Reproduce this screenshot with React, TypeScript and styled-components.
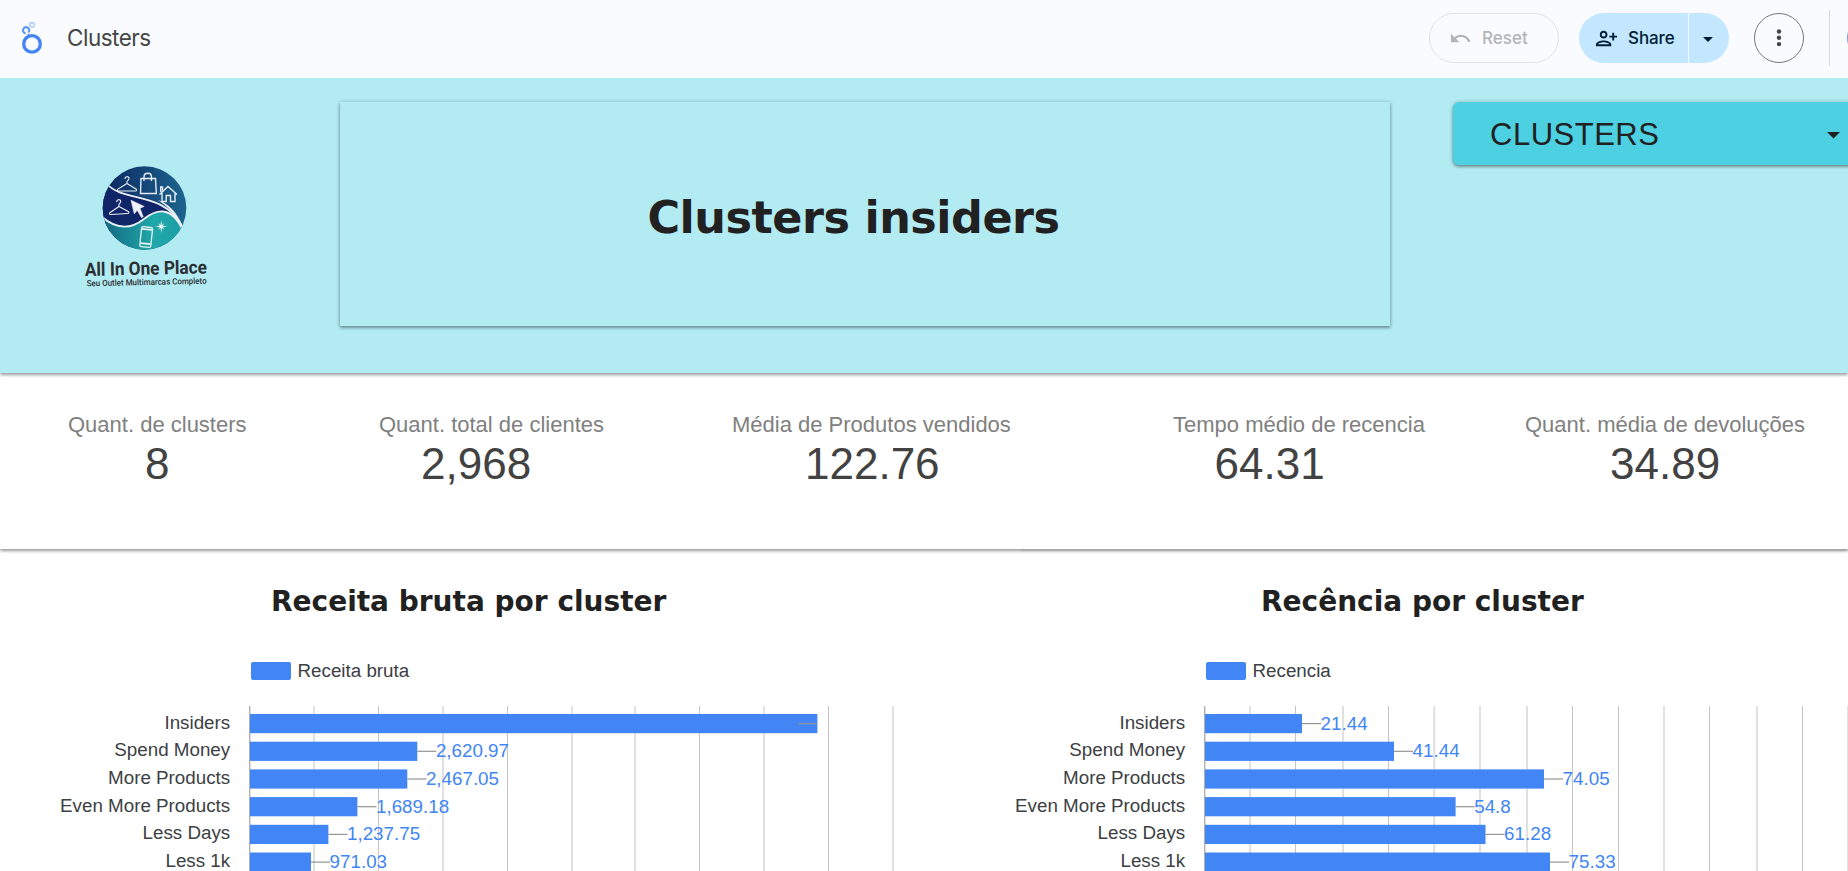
import React from "react";
import styled, { createGlobalStyle } from "styled-components";

const GlobalStyle = createGlobalStyle`
  * { box-sizing: border-box; }
  body { margin: 0; background: #fff; overflow: hidden; }
`;

const sans = `"Liberation Sans", Arial, sans-serif`;
const ui = `Inter, Roboto, sans-serif`;
const wide = `"DejaVu Sans", Verdana, sans-serif`;
const shadow = `0 2px 3px rgba(0,0,0,.33), 0 0 4px rgba(0,0,0,.2)`;

const Page = styled.div`
  width: 1848px;
  height: 871px;
  overflow: hidden;
  display: flex;
  flex-direction: column;
  background: #fff;
  font-family: ${sans};
`;

const Toolbar = styled.header`
  height: 78px;
  flex: none;
  display: flex;
  align-items: flex-start;
  padding-top: 13px;
  background: #f9fbff;
  font-family: ${ui};
  z-index: 3;
  & > * { flex: none; }
`;

const AppLogo = styled.svg`
  width: 28px;
  height: 50px;
  margin-left: 18px;
`;

const ReportName = styled.div`
  margin-left: 21px;
  width: 1362px;
  line-height: 50px;
  font-size: 22.5px;
  letter-spacing: -0.5px;
  color: #444746;
`;

const ResetButton = styled.button`
  width: 130px;
  height: 50px;
  border: 1px solid #e0e2e6;
  border-radius: 25px;
  background: transparent;
  display: flex;
  align-items: center;
  gap: 10px;
  padding: 0 0 0 19px;
  font: 500 17px ${ui};
  letter-spacing: 0;
  color: #b2b4b7;
`;

const ShareGroup = styled.div`
  margin-left: 20px;
  width: 150px;
  height: 50px;
  border-radius: 25px;
  overflow: hidden;
  display: flex;
  gap: 1px;
`;

const ShareButton = styled.button`
  width: 109px;
  border: 0;
  background: #c2e7ff;
  display: flex;
  align-items: center;
  gap: 10px;
  padding: 0 0 0 16px;
  font: 500 17px ${ui};
  letter-spacing: -0.1px;
  color: #001d35;
`;

const ShareMenu = styled.button`
  flex: 1;
  border: 0;
  background: #c2e7ff;
  padding: 3px 0 0 14px;
  display: flex;
  align-items: center;
`;

const MoreButton = styled.button`
  width: 50px;
  height: 50px;
  margin-left: 25px;
  border: 1px solid #747775;
  border-radius: 50%;
  background: transparent;
  padding: 0;
  display: flex;
  align-items: center;
  justify-content: center;
`;

const Divider = styled.div`
  width: 1px;
  height: 56px;
  margin: -3px 17px 0 25px;
  background: #d5d7da;
`;

const Avatar = styled.div`
  width: 40px;
  height: 40px;
  margin-top: 5px;
  border-radius: 50%;
  background: #7a9be0;
`;

const Hero = styled.section`
  height: 295px;
  flex: none;
  display: flex;
  align-items: flex-start;
  padding-top: 24px;
  background: #b2ebf2;
  box-shadow: ${shadow};
  z-index: 2;
`;

const BrandLogo = styled.svg`
  width: 150px;
  height: 150px;
  margin: 48px 120px 0 70px;
  flex: none;
`;

const TitleBox = styled.div`
  width: 1050px;
  height: 224px;
  flex: none;
  display: flex;
  align-items: center;
  justify-content: center;
  padding: 7px 23px 0 0;
  background: #b2ebf2;
  box-shadow: ${shadow};
`;

const Title = styled.h1`
  margin: 0;
  font: bold 44.5px ${wide};
  letter-spacing: -0.5px;
  white-space: nowrap;
  color: #212121;
`;

const ClusterSelect = styled.div`
  width: 420px;
  height: 63px;
  flex: none;
  margin-left: 63px;
  padding-left: 37px;
  display: flex;
  align-items: center;
  border-radius: 6px;
  background: #4dd0e1;
  box-shadow: ${shadow};
  font-size: 31px;
  letter-spacing: 0.5px;
  color: #212121;
  & > svg { margin-top: 4px; }
`;

const SelectText = styled.span`
  width: 337px;
  padding-top: 2px;
`;

const Kpis = styled.section`
  position: relative;
  height: 176px;
  flex: none;
  display: flex;
  padding: 38px 0 0 68px;
  background: #fff;
  box-shadow: ${shadow};
  z-index: 1;
  &::after {
    content: "";
    position: absolute;
    left: 1021px;
    right: 0;
    bottom: 0;
    height: 1px;
    box-shadow: 0 2px 2px rgba(0, 0, 0, 0.15);
  }
`;

const Kpi = styled.div<{ $width: number }>`
  width: ${(p) => p.$width}px;
  flex: none;
  white-space: nowrap;
`;

const KpiLabel = styled.div`
  font-size: 22px;
  line-height: 28px;
  color: #808080;
`;

const KpiValue = styled.div<{ $indent: number }>`
  padding-left: ${(p) => p.$indent}px;
  font-size: 44px;
  line-height: 50px;
  color: #424242;
`;

const Charts = styled.section`
  display: flex;
  flex: none;
  height: 322px;
`;

const Panel = styled.article`
  width: 955px;
  flex: none;
  padding-top: 35px;
`;

const PanelTitle = styled.h2<{ $indent: number }>`
  margin: 0 0 0 ${(p) => p.$indent}px;
  height: 78px;
  font: bold 28px/36px ${wide};
  white-space: nowrap;
  color: #212121;
`;

const Legend = styled.div`
  display: flex;
  align-items: center;
  gap: 7px;
  height: 18px;
  margin-left: 251px;
  font-size: 18.8px;
  color: #3c4043;
`;

const Swatch = styled.span`
  width: 39.5px;
  height: 18px;
  border-radius: 2px;
  background: #4285f4;
`;

const Plot = styled.svg`
  display: block;
  margin-top: 20px;
  width: 955px;
  height: 171px;
  font-family: ${sans};
  font-size: 18.8px;
`;

type Bar = { name: string; value: string; end: number; inside?: boolean };

const categories = ["Insiders", "Spend Money", "More Products", "Even More Products", "Less Days", "Less 1k"];
const revenueValues = ["", "2,620.97", "2,467.05", "1,689.18", "1,237.75", "971.03"];
const revenueEnds = [817.4, 417.3, 407.3, 357.4, 328.4, 311];
const recencyValues = ["21.44", "41.44", "74.05", "54.8", "61.28", "75.33"];
const recencyEnds = [347, 439, 589, 500.6, 530.5, 595];

const toBars = (values: string[], ends: number[]): Bar[] =>
  categories.map((name, i) => ({ name, value: values[i], end: ends[i], inside: values[i] === "" }));

const revenueGrid = [314, 378.5, 443, 507.5, 572, 635, 699.5, 764, 828.5, 893];
const recencyGrid = [295, 340.5, 388, 433.5, 479.2, 525, 572, 617.5, 663.5, 709, 754.5, 802, 847.5, 893];

function BarChart({ bars, grid }: { bars: Bar[]; grid: number[] }) {
  return (
    <Plot viewBox="0 0 955 171">
      {grid.map((x) =>
        x % 1 === 0.5 ? (
          <rect key={x} x={x - 0.5} y="6" width="1" height="165" fill="#c4c4c4" />
        ) : (
          <rect key={x} x={x - 1} y="6" width="2" height="165" fill="#e0e0e0" />
        )
      )}
      <rect x="249" y="6" width="1.4" height="165" fill="#b0b0b0" />
      {bars.map((b, i) => {
        const y = 14 + i * 27.7;
        return (
          <g key={b.name}>
            <text x="230.2" y={y + 14.6} textAnchor="end" fill="#3c4043">{b.name}</text>
            <rect x="250" y={y} width={b.end - 250} height="19.2" fill="#4285f4" />
            <rect x={b.inside ? b.end - 19 : b.end} y={y + 9} width="19" height="1.2" fill="#949494" />
            <text x={b.end + 18.6} y={y + 15.6} fill="#4285f4">{b.value}</text>
          </g>
        );
      })}
    </Plot>
  );
}

function Hanger() {
  return <path d="M-2-5c0-3 4-3 4-.6 0 2-2 2-2 3.6v1.5M0-.5l9 5.5c1 1 .6 2-.6 2H-8.6c-1.3 0-1.6-1.2-.5-1.9z" fill="none" stroke="#e6edf4" strokeWidth="1.1" />;
}

function Brand() {
  return (
    <BrandLogo viewBox="0 0 150 150">
      <defs>
        <linearGradient id="navy" x1="0" y1="0" x2="1" y2="0">
          <stop offset="0" stopColor="#0c2560" />
          <stop offset="1" stopColor="#1d6790" />
        </linearGradient>
        <linearGradient id="teal" x1="0" y1="0" x2="1" y2="0">
          <stop offset="0" stopColor="#11637f" />
          <stop offset="0.65" stopColor="#20a8aa" />
          <stop offset="1" stopColor="#1b9da5" />
        </linearGradient>
        <clipPath id="disc"><circle cx="74.5" cy="58" r="41.8" /></clipPath>
      </defs>
      <g clipPath="url(#disc)">
        <rect x="30" y="14" width="90" height="90" fill="url(#navy)" />
        <path d="M30 30C55 52 96 40 113 78L30 82z" fill="#102568" />
        <path d="M30 64C46 78 60 80 76 68S103 60 113 79V105H30z" fill="url(#teal)" />
        <path d="M37 34C54 53 92 40 112 76" fill="none" stroke="#e9eff5" strokeWidth="1.8" />
        <path d="M32 67C46 79 60 80 74 69S102 57 113 80" fill="none" stroke="#e9eff5" strokeWidth="1.8" />
        <path d="M88 50c10 4 18 10 25 27c-8-13-15-20-25-27z" fill="#e9eff5" />
      </g>
      <g transform="translate(57 34)"><Hanger /></g>
      <g transform="translate(49 57) rotate(-3)"><Hanger /></g>
      <path d="M71 28.5h14.5l.8 15H70.5zM74 31v-4c0-5 7.5-5 7.5 0v4" fill="none" stroke="#e6edf4" strokeWidth="1.4" />
      <path d="M89.5 44.5 98 36.5l9 8M92 43v8.5h4.2v-6h4.3v6h4.5V43M92.5 40.5V37h-1.8v5" fill="none" stroke="#e6edf4" strokeWidth="1.4" />
      <path d="M61 50.3 74.2 56.4 70 58.3 73.2 66.8 71.5 67.6 67.2 60.3 64.3 63.8z" fill="#eef2f6" stroke="#eef2f6" strokeWidth=".6" />
      <g transform="rotate(6 76 87)">
        <rect x="70.7" y="77" width="11" height="20" rx="1.6" fill="none" stroke="#e4f3f3" strokeWidth="1.3" />
        <path d="M71 79.3h10.4M71 93.7h10.4" stroke="#e4f3f3" strokeWidth="1.8" />
      </g>
      <path d="M91.2 70 91.9 75 94.6 73.1 92.7 75.8 97.3 76.5 92.7 77.2 94.6 79.9 91.9 78 91.2 83 90.5 78 87.8 79.9 89.7 77.2 85.2 76.5 89.7 75.8 87.8 73.1 90.5 75z" fill="#e4f3f3" />
      <g fontFamily="Roboto, sans-serif" fill="#2a2e33" transform="rotate(-1.2 15 126)">
        <text x="15" y="126" fontSize="18.5" fontWeight="700" textLength="122" lengthAdjust="spacingAndGlyphs">All In One Place</text>
        <text x="16.5" y="136.3" fontSize="8.6" fontWeight="500" textLength="120" lengthAdjust="spacingAndGlyphs">Seu Outlet Multimarcas Completo</text>
      </g>
    </BrandLogo>
  );
}

const kpis = [
  { label: "Quant. de clusters", value: "8", width: 311, indent: 77 },
  { label: "Quant. total de clientes", value: "2,968", width: 353, indent: 42 },
  { label: "Média de Produtos vendidos", value: "122.76", width: 441, indent: 73 },
  { label: "Tempo médio de recencia", value: "64.31", width: 352, indent: 41.5 },
  { label: "Quant. média de devoluções", value: "34.89", width: 300, indent: 85 },
];

export default function App() {
  return (
    <Page>
      <GlobalStyle />
      <Toolbar>
        <AppLogo viewBox="18 13 28 50" fill="none">
          <circle cx="32" cy="43.9" r="8.3" stroke="#4285f4" strokeWidth="3.3" />
          <path d="M25.6 33.5a3.2 3.2 0 1 1 3.5-4.4c.5 1.4 0 2.4-.7 3.4" stroke="#5b95f6" strokeWidth="2.1" />
          <path d="M27.6 34.4l1.3-1 .6 2-1.4.7z" fill="#4285f4" />
          <circle cx="32" cy="24.8" r="2.3" stroke="#aecbfa" strokeWidth="1.5" />
        </AppLogo>
        <ReportName>Clusters</ReportName>
        <ResetButton>
          <svg width="23" height="23" viewBox="0 0 24 24" fill="currentColor">
            <path d="M12.5 8c-2.65 0-5.05.99-6.9 2.6L2 7v9h9l-3.62-3.62c1.39-1.16 3.16-1.88 5.12-1.88 3.54 0 6.55 2.31 7.6 5.5l2.37-.78C21.08 11.03 17.15 8 12.5 8z" />
          </svg>
          Reset
        </ResetButton>
        <ShareGroup>
          <ShareButton>
            <svg width="23" height="23" viewBox="0 0 24 24" fill="currentColor">
              <path d="M13 8c0-2.21-1.79-4-4-4S5 5.79 5 8s1.79 4 4 4 4-1.79 4-4zm-2 0c0 1.1-.9 2-2 2s-2-.9-2-2 .9-2 2-2 2 .9 2 2zM1 18v2h16v-2c0-2.66-5.33-4-8-4s-8 1.34-8 4zm2 0c.2-.71 3.3-2 6-2 2.69 0 5.78 1.28 6 2H3zM20 14v-3h3V9h-3V6h-2v3h-3v2h3v3h2z" />
            </svg>
            Share
          </ShareButton>
          <ShareMenu>
            <svg width="10" height="5" viewBox="0 0 10 5"><path d="M0 0h10L5 5z" fill="#001d35" /></svg>
          </ShareMenu>
        </ShareGroup>
        <MoreButton>
          <svg width="6" height="18" viewBox="0 0 6 18" fill="#444746">
            <circle cx="3" cy="2.5" r="2.2" /><circle cx="3" cy="8.8" r="2.2" /><circle cx="3" cy="15.1" r="2.2" />
          </svg>
        </MoreButton>
        <Divider />
        <Avatar />
      </Toolbar>
      <Hero>
        <Brand />
        <TitleBox><Title>Clusters insiders</Title></TitleBox>
        <ClusterSelect>
          <SelectText>CLUSTERS</SelectText>
          <svg width="13" height="6.5" viewBox="0 0 13 6.5"><path d="M0 0h13L6.5 6.5z" fill="#212121" /></svg>
        </ClusterSelect>
      </Hero>
      <Kpis>
        {kpis.map((k) => (
          <Kpi key={k.label} $width={k.width}>
            <KpiLabel>{k.label}</KpiLabel>
            <KpiValue $indent={k.indent}>{k.value}</KpiValue>
          </Kpi>
        ))}
      </Kpis>
      <Charts>
        <Panel>
          <PanelTitle $indent={271}>Receita bruta por cluster</PanelTitle>
          <Legend><Swatch />Receita bruta</Legend>
          <BarChart bars={toBars(revenueValues, revenueEnds)} grid={revenueGrid} />
        </Panel>
        <Panel>
          <PanelTitle $indent={306}>Recência por cluster</PanelTitle>
          <Legend><Swatch />Recencia</Legend>
          <BarChart bars={toBars(recencyValues, recencyEnds)} grid={recencyGrid} />
        </Panel>
      </Charts>
    </Page>
  );
}
